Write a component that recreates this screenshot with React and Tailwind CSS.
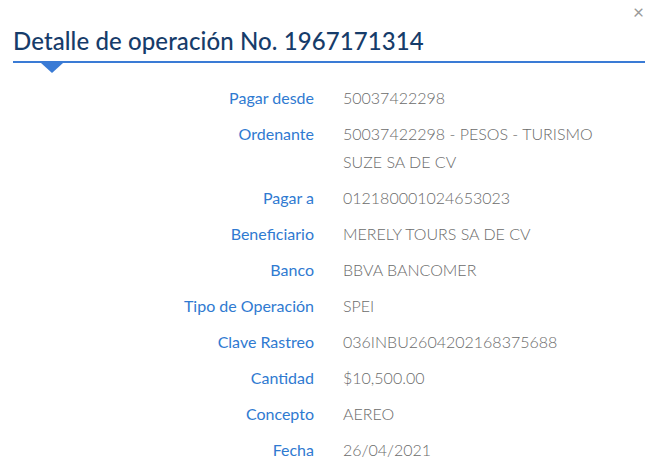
import React from 'react';

const rows = [
  { label: 'Pagar desde', value: '50037422298' },
  { label: 'Ordenante', value: '50037422298 - PESOS - TURISMO SUZE SA DE CV' },
  { label: 'Pagar a', value: '012180001024653023' },
  { label: 'Beneficiario', value: 'MERELY TOURS SA DE CV' },
  { label: 'Banco', value: 'BBVA BANCOMER' },
  { label: 'Tipo de Operación', value: 'SPEI' },
  { label: 'Clave Rastreo', value: '036INBU2604202168375688' },
  { label: 'Cantidad', value: '$10,500.00' },
  { label: 'Concepto', value: 'AEREO' },
  { label: 'Fecha', value: '26/04/2021' },
];

const App = () => {
  return (
    <div className="w-[651px] h-[472px] bg-white relative overflow-hidden" style={{ fontFamily: 'Lato, "Noto Sans", sans-serif' }}>
      {/* Close button */}
      <button className="absolute right-[7px] top-[2px] text-[#9a9a9a] text-[19px] leading-none">×</button>

      {/* Header */}
      <div className="pt-[26px] pl-[13px] pr-[6px]">
        <h1 className="text-[24px] leading-[30px] font-medium text-[#163c6a] tracking-[0.1px]">
          Detalle de operación No. 1967171314
        </h1>
        <div className="mt-[5px] h-[2px] bg-[#3a7bd5] relative">
          <div className="absolute left-[28px] top-[2px] w-0 h-0 border-l-[11px] border-r-[11px] border-t-[10px] border-l-transparent border-r-transparent border-t-[#3a7bd5]" />
        </div>
      </div>

      {/* Detail rows */}
      <div className="mt-[21px] flex flex-col gap-[8px]">
        {rows.map((row) => (
          <div key={row.label} className="flex text-[16px] leading-[28px]">
            <div className="w-[314px] text-right text-[#2f7ad1] shrink-0">{row.label}</div>
            <div className="ml-[29px] w-[260px] text-[#6b6b6b] font-light">{row.value}</div>
          </div>
        ))}
      </div>
    </div>
  );
};

export default App;
